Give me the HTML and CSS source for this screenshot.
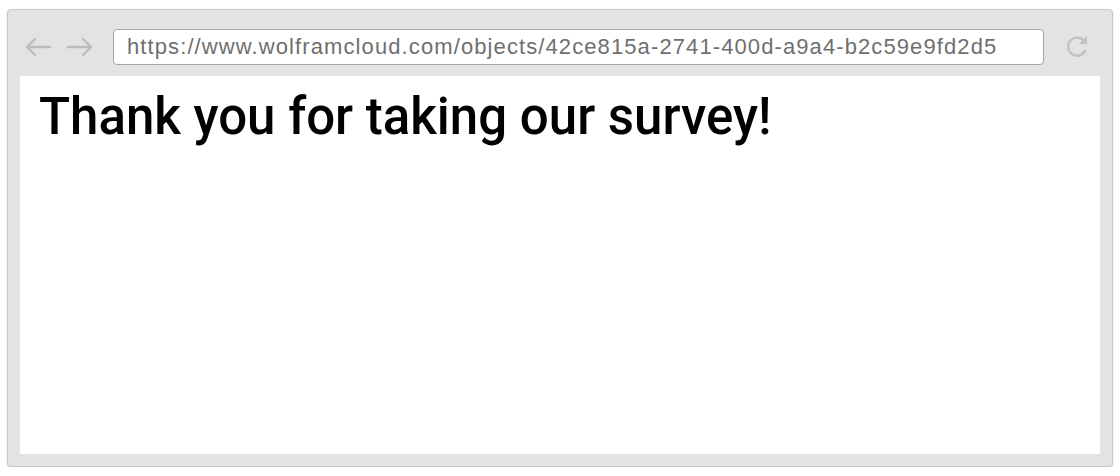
FILE: index.html
```html
<!DOCTYPE html>
<html lang="en">
<head>
  <meta charset="UTF-8">
  <title>Thank you</title>
  <link rel="stylesheet" href="styles.css">
</head>
<body>
  <div class="window">
    <div class="toolbar">
      <div class="nav">
        <svg class="arrow" width="28" height="20" viewBox="0 0 28 20">
          <path d="M26 10H3M11 2L3 10l8 8" fill="none" stroke="#bcbcbc" stroke-width="2.4" stroke-linecap="round" stroke-linejoin="round"/>
        </svg>
        <svg class="arrow" width="28" height="20" viewBox="0 0 28 20">
          <path d="M2 10h23M17 2l8 8-8 8" fill="none" stroke="#bcbcbc" stroke-width="2.4" stroke-linecap="round" stroke-linejoin="round"/>
        </svg>
      </div>
      <div class="url">https://www.wolframcloud.com/objects/42ce815a-2741-400d-a9a4-b2c59e9fd2d5</div>
      <svg class="reload" width="26" height="26" viewBox="0 0 26 26">
        <path d="M20.5 8.5A9 9 0 1 0 21.5 17" fill="none" stroke="#c2c2c2" stroke-width="2.4"/>
        <path d="M23 3v8h-8z" fill="#c2c2c2"/>
      </svg>
    </div>
    <div class="page">
      <h1>Thank you for taking our survey!</h1>
    </div>
  </div>
</body>
</html>
```

FILE: styles.css
```css
body {
  margin: 0;
  padding: 9px 7px 0;
  background: #ffffff;
  font-family: 'Roboto', sans-serif;
}

.window {
  height: 458px;
  box-sizing: border-box;
  border: 1px solid #c9c9c9;
  border-radius: 4px;
  background: #e3e3e3;
  box-shadow: 0 1px 2px rgba(0, 0, 0, 0.18);
  display: flex;
  flex-direction: column;
  padding: 0 12px 12px;
}

.toolbar {
  height: 58px;
  padding: 8px 0 0 4px;
  display: flex;
  align-items: center;
}

.nav {
  display: flex;
  gap: 14px;
  width: 89px;
}

.arrow {
  display: block;
}

.url {
  flex: 1;
  height: 36px;
  box-sizing: border-box;
  border: 1px solid #a6a6a6;
  border-radius: 4px;
  background: #ffffff;
  padding: 0 13px;
  line-height: 34px;
  font-family: 'Liberation Sans', Arial, sans-serif;
  font-size: 22px;
  letter-spacing: 1.1px;
  color: #6f6f6f;
  white-space: nowrap;
  overflow: hidden;
}

.reload {
  display: block;
  margin: -2px 10px 0 20px;
}

.page {
  flex: 1;
  background: #ffffff;
  padding: 0 19px;
}

h1 {
  margin: 12px 0 0;
  font-size: 51px;
  font-weight: 500;
  color: #000000;
  line-height: 58px;
}
```
